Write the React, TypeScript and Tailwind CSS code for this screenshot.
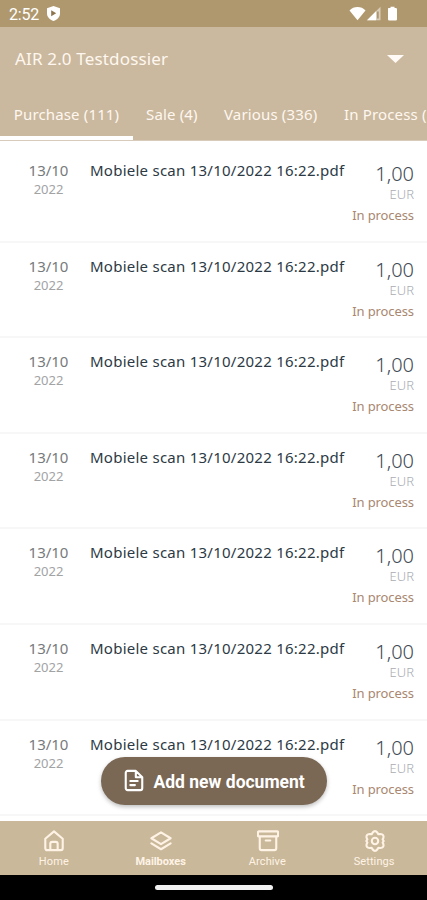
import React from "react";

const rows = Array.from({ length: 7 }, (_, id) => ({
  id,
  day: "13/10",
  year: "2022",
  name: "Mobiele scan 13/10/2022 16:22.pdf",
  amount: "1,00",
  currency: "EUR",
  status: "In process",
}));

function StatusBar() {
  return (
    <div className="flex h-[27px] shrink-0 items-center bg-[#b0986e] pl-[9px] pr-[28px] text-white">
      <span className="pt-[1px] font-['Roboto',sans-serif] text-[16px] leading-[27px] tracking-[-0.2px]">2:52</span>
      <svg className="ml-[7px]" width="15" height="17" viewBox="0 0 15 17">
        <path d="M7.5 1 14 3.2v5.3c0 3.5-2.7 6-6.5 7.6C3.700 14.500 1 12 1 8.500V3.200Z" fill="#fff" />
        <path d="M5.200 5.300v6l5-3Z" fill="#8d754f" />
      </svg>
      <svg className="ml-auto" width="50" height="16" viewBox="0 0 50 16">
        <path d="M0.500 4.400C4.500-.1 12.500-.1 16.500 4.400L8.500 14.300Z" fill="#fff" />
        <path d="M18 14.300 31.500 .7v13.600Z" fill="#d9ceba" />
        <path d="M18 14.300 27 5.200v9.100Z" fill="#fff" />
        <path d="M28.200 5.500h1.400v7h-1.400z" fill="#a08960" />
        <path d="M39.500 2h2V.7h4V2h1.300q1.200 0 1.200 1.200v10q0 1.200-1.200 1.200h-6.600q-1.200 0-1.200-1.200v-10q0-1.200 .5-1.200Z" fill="#fff" />
      </svg>
    </div>
  );
}

function Header() {
  return (
    <header className="h-[114px] shrink-0 border-b border-[#d8cbbb] bg-[#cab99f] text-[#fff7ef]">
      <div className="flex h-[63px] items-center justify-between pl-[15px] pr-[23px]">
        <h1 className="text-[17px] tracking-[0.16px] whitespace-nowrap">AIR 2.0 Testdossier</h1>
        <svg width="17" height="8" viewBox="0 0 17 8">
          <path d="M0 0h17L8.500 8Z" fill="#fffaf5" />
        </svg>
      </div>
      <nav className="flex h-[50px] overflow-hidden text-[15px] tracking-[0.15px] whitespace-nowrap">
        <div className="flex w-[133px] shrink-0 justify-center border-b-[4px] border-white pt-[13px] leading-[22px]">Purchase (111)</div>
        <div className="w-[78px] shrink-0 pl-[13px] pt-[13px] leading-[22px]">Sale (4)</div>
        <div className="w-[120px] shrink-0 pl-[13px] pt-[13px] leading-[22px]">Various (336)</div>
        <div className="shrink-0 pl-[13px] pt-[13px] leading-[22px]">In Process (12)</div>
      </nav>
    </header>
  );
}

function DocumentRow({ row }: { row: (typeof rows)[number] }) {
  return (
    <li className="flex h-[95.600px] shrink-0 border-b-2 border-[#f7f7f7] pr-[13px]">
      <div className="w-[97px] shrink-0 pt-[13px] text-center">
        <p className="text-[15px] leading-[20px] text-[#777a7c]">{row.day}</p>
        <p className="text-[13px] leading-[18px] text-[#a2a3a5]">{row.year}</p>
      </div>
      <p className="-ml-[7px] pt-[13px] text-[15px] leading-[20px] tracking-[0.25px] whitespace-nowrap text-[#2c3a45]">{row.name}</p>
      <div className="ml-auto shrink-0 pt-[15px] text-right">
        <p className="text-[20px] leading-[23px] font-light text-[#3f4b54]">{row.amount}</p>
        <p className="text-[13px] leading-[18px] font-light text-[#a9acb2]">{row.currency}</p>
        <p className="mt-[2px] text-[13px] leading-[20px] tracking-[-0.1px] text-[#a98770]">{row.status}</p>
      </div>
    </li>
  );
}

const stroke = {
  fill: "none",
  stroke: "currentColor",
  strokeWidth: 2.3,
  strokeLinecap: "round" as const,
  strokeLinejoin: "round" as const,
  viewBox: "0 0 24 24",
};

const tabs = [
  {
    label: "Home",
    icon: <path d="M2.500 9.500 12 1.500l9.500 8V20a2 2 0 0 1-2 2h-15a2 2 0 0 1-2-2ZM8 21v-6a2 2 0 0 1 2-2h4a2 2 0 0 1 2 2v6" />,
  },
  { label: "Mailboxes", icon: <path d="m12 2.500 10.500 6.500-10.500 6.500L1.500 9ZM1.500 14.500l10.500 6.500L22.500 14.500" /> },
  {
    label: "Archive",
    icon: <path d="M2 1.500h20a1 1 0 0 1 1 1v3.500a1 1 0 0 1-1 1H2a1 1 0 0 1-1-1V2.500a1 1 0 0 1 1-1ZM3 7V20a2 2 0 0 0 2 2h14a2 2 0 0 0 2-2V7M9.500 11.500h5" />,
  },
  {
    label: "Settings",
    icon: (
      <>
        <path d="M9.300 3Q12-.6 14.700 3L15.600 4.500 18 4.400Q22 4.600 21.200 8.500L20.300 10.300 21.500 12 20.300 13.700 21.200 15.500Q22 19.400 18 19.600L15.600 19.500 14.700 21Q12 24.600 9.300 21L8.400 19.500 6 19.600Q2 19.400 2.800 15.500L3.700 13.700 2.500 12 3.700 10.300 2.800 8.500Q2 4.600 6 4.400L8.400 4.500Z" />
        <circle cx="12" cy="12" r="3.500" />
      </>
    ),
  },
];

export default function App() {
  return (
    <div className="relative flex h-[900px] w-[427px] flex-col overflow-hidden bg-white font-['Noto_Sans',sans-serif]">
      <StatusBar />
      <Header />
      <main className="flex-1 overflow-hidden">
        <ul className="flex flex-col pt-[6px]">
          {rows.map((row) => (
            <DocumentRow key={row.id} row={row} />
          ))}
        </ul>
      </main>
      <button className="absolute left-[101px] top-[757px] flex h-[48px] w-[226px] items-center rounded-full bg-[#7a6754] pl-[22px] pt-[2px] font-['Roboto',sans-serif] text-[17.500px] font-bold whitespace-nowrap text-white shadow-[0_2px_4px_rgba(0,0,0,0.25)]">
        <svg {...stroke} width="22" height="23" className="mr-[8.500px] -mt-[3px] shrink-0">
          <path d="M5 1.500h9l7 7V20.500a2 2 0 0 1-2 2H5a2 2 0 0 1-2-2V3.500a2 2 0 0 1 2-2ZM14 2v6.500h6.500M8 12.500h8M8 17h5" />
        </svg>
        Add new document
      </button>
      <nav className="flex h-[54px] shrink-0 bg-[#c9b899] font-['Roboto',sans-serif] text-[#fff3e6]">
        {tabs.map((tab) => (
          <div key={tab.label} className="flex flex-1 flex-col items-center pt-[9px]">
            <svg {...stroke} width="22" height="22" className="ml-[2px]">{tab.icon}</svg>
            <span className={tab.label === "Mailboxes" ? "ml-[1px] text-[11px] leading-[19px] font-bold tracking-[-0.05px]" : "ml-[1px] text-[11px] leading-[19px] tracking-[0.1px]"}>{tab.label}</span>
          </div>
        ))}
      </nav>
      <div className="flex h-[25px] shrink-0 justify-center bg-black pt-[10px]">
        <div className="h-[5px] w-[118px] rounded-full bg-[#f0f0f0]" />
      </div>
    </div>
  );
}
